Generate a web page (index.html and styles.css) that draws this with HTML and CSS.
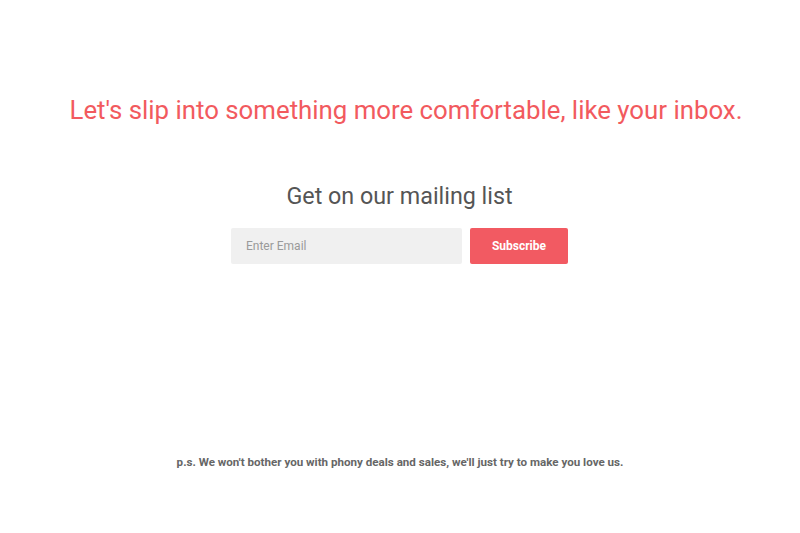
FILE: index.html
```html
<!DOCTYPE html>
<html>
<head>
<meta charset="utf-8">
<link rel="stylesheet" href="styles.css">
</head>
<body>
<main class="page">
  <h1 class="headline">Let's slip into something more comfortable, like your inbox.</h1>
  <section class="signup">
    <h2 class="signup-title">Get on our mailing list</h2>
    <form class="signup-form">
      <input class="signup-input" type="email" placeholder="Enter Email">
      <button class="signup-button" type="button">Subscribe</button>
    </form>
  </section>
  <p class="note">p.s. We won't bother you with phony deals and sales, we'll just try to make you love us.</p>
</main>
</body>
</html>
```
FILE: styles.css
```css
html, body {
  margin: 0;
  padding: 0;
  background: #fff;
}
body {
  font-family: Roboto, "Liberation Sans", sans-serif;
}
.page {
  width: 800px;
  height: 533px;
  display: flex;
  flex-direction: column;
  align-items: center;
}
.headline {
  margin: 93px 0 0 12px;
  font-size: 25.8px;
  line-height: 34px;
  font-weight: 400;
  color: #f25a5e;
}
.signup {
  margin-top: 54px;
  margin-right: 1px;
  display: flex;
  flex-direction: column;
  align-items: center;
}
.signup-title {
  margin: 0;
  font-size: 23.3px;
  line-height: 30px;
  font-weight: 400;
  color: #555;
}
.signup-form {
  margin-top: 17px;
  display: flex;
  gap: 8px;
}
.signup-input {
  width: 231px;
  height: 36px;
  box-sizing: border-box;
  border: none;
  border-radius: 2px;
  background: #f0f0f0;
  padding: 0 15px;
  font-family: inherit;
  font-size: 12px;
  color: #555;
  outline: none;
}
.signup-input::placeholder {
  color: #9a9a9a;
}
.signup-button {
  width: 98px;
  height: 36px;
  border: none;
  border-radius: 2px;
  background: #f25a62;
  color: #fff;
  font-family: inherit;
  font-size: 12px;
  font-weight: 700;
  padding: 0;
}
.note {
  margin: 190px 0 0;
  font-size: 11.6px;
  line-height: 16px;
  font-weight: 700;
  color: #666;
}
```
